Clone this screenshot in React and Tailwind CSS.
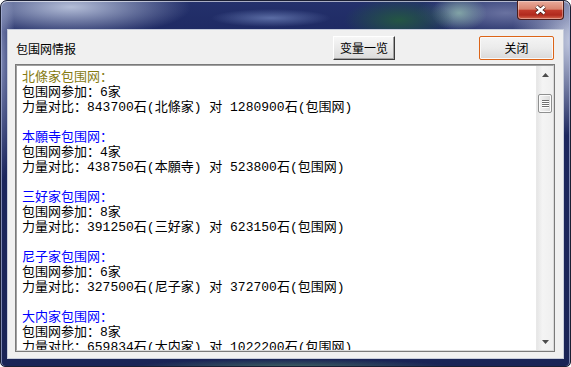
const blocks = [
  { name: "北條家", color: "text-[#857a10]", count: 6, own: "843700", net: "1280900" },
  { name: "本願寺", color: "text-[#0000ff]", count: 4, own: "438750", net: "523800" },
  { name: "三好家", color: "text-[#0000ff]", count: 8, own: "391250", net: "623150" },
  { name: "尼子家", color: "text-[#0000ff]", count: 6, own: "327500", net: "372700" },
  { name: "大内家", color: "text-[#0000ff]", count: 8, own: "659834", net: "1022200" },
];

function CloseButton() {
  return (
    <div className="flex h-[19px] w-[47px] items-center justify-center rounded-b-[4px] border border-t-0 border-[#4a1d1a] bg-[linear-gradient(to_bottom,#e9ab9c_0%,#d9846f_45%,#c13a2b_52%,#b0291d_78%,#d66a50_100%)] shadow-[inset_0_0_0_1px_rgba(255,255,255,0.35)]">
      <svg width="13" height="10" viewBox="0 0 13 10">
        <path d="M2.5 1.5 L10.5 8.5 M10.5 1.5 L2.5 8.5" stroke="#3b1713" strokeWidth="4" />
        <path d="M2.5 1.5 L10.5 8.5 M10.5 1.5 L2.5 8.5" stroke="#ffffff" strokeWidth="2.4" />
      </svg>
    </div>
  );
}

function Arrow({ down }) {
  return (
    <div className="flex h-[17px] items-center justify-center">
      <svg width="7" height="4" viewBox="0 0 7 4">
        <path d={down ? "M0 0 H7 L3.5 4 Z" : "M0 4 H7 L3.5 0 Z"} fill="#4d4d4d" />
      </svg>
    </div>
  );
}

function ScrollBar() {
  return (
    <div className="flex w-[17px] flex-col border-l border-[#e8e8e8] bg-[linear-gradient(to_right,#e6e6e6,#f4f4f4_35%,#efefef)]">
      <Arrow />
      <div className="mx-auto mt-[11px] flex h-[19px] w-[14px] flex-col items-center justify-center gap-[1px] rounded-[2px] border border-[#8f9090] bg-[linear-gradient(to_right,#f3f3f3,#e6e6e6_50%,#d9d9d9)] shadow-[inset_0_0_0_1px_#fbfbfb]">
        {[0, 1, 2, 3].map((i) => (
          <div key={i} className="h-[1px] w-[7px] bg-[#6f6f6f] shadow-[0_1px_0_#ffffff]" />
        ))}
      </div>
      <div className="flex-1" />
      <Arrow down />
    </div>
  );
}

export default function App() {
  return (
    <div className="h-[367px] w-[571px] bg-white font-['Noto_Sans_CJK_SC',sans-serif]">
      <div className="flex h-full w-full flex-col overflow-hidden rounded-t-[7px] rounded-b-[5px] border border-[#1a1f33] bg-[radial-gradient(ellipse_120px_30px_at_70px_6px,rgba(195,205,228,0.9),transparent),radial-gradient(ellipse_60px_9px_at_270px_17px,rgba(110,130,185,0.75),transparent),radial-gradient(ellipse_55px_22px_at_398px_19px,rgba(36,88,66,0.95),transparent),radial-gradient(ellipse_28px_18px_at_458px_12px,rgba(140,178,172,0.85),transparent),radial-gradient(ellipse_90px_24px_at_505px_12px,rgba(118,126,170,0.85),transparent),radial-gradient(ellipse_60px_95px_at_571px_40px,rgba(205,212,232,0.95),transparent),radial-gradient(ellipse_160px_8px_at_290px_366px,rgba(70,112,100,0.8),transparent),radial-gradient(ellipse_14px_120px_at_0px_60px,rgba(150,160,200,0.8),transparent),linear-gradient(to_bottom,#24316c,#1d2861_40px,#1a2456)] px-[6px] pb-[7px] shadow-[inset_0_1px_0_rgba(255,255,255,0.6),inset_1px_0_0_rgba(170,180,215,0.7),inset_-1px_0_0_rgba(170,180,215,0.7)]">
        <div className="flex h-[28px] shrink-0 justify-end">
          <CloseButton />
        </div>

        <div className="flex flex-1 flex-col border border-[#c7cddb] bg-[#f0f0f0] pl-[7px] pr-[8px] pt-[6px]">
          <div className="flex h-[24px] items-start">
            <div className="flex-1 pl-[1px] pt-[6px] text-[12px] leading-[14px] text-black">包围网情报</div>
            <button className="h-[24px] w-[62px] border border-t-white border-l-white border-r-[#3c3c3c] border-b-[#3c3c3c] bg-[linear-gradient(to_bottom,#f7f7f7,#e9e9e9_50%,#dadada)] text-[12px] leading-[14px] text-black shadow-[inset_-1px_-1px_0_#a0a0a0]">
              变量一览
            </button>
            <button className="ml-[84px] mr-[1px] h-[24px] w-[75px] rounded-[2px] border border-[#dc6418] bg-[linear-gradient(to_bottom,#f4f4f4,#ebebeb_50%,#d9d9d9)] text-[12px] leading-[14px] text-black shadow-[inset_0_0_0_1px_#f9f9f9]">
              关闭
            </button>
          </div>

          <div className="mt-[4px] h-[288px] border border-[#7a7a7a]">
            <div className="flex h-full border border-t-[#a0a0a0] border-l-[#a0a0a0] border-r-[#dadada] border-b-[#dadada] bg-white">
              <div className="flex-1 overflow-hidden whitespace-nowrap pl-[5px] pt-[4px] font-['Liberation_Mono','Noto_Sans_CJK_SC',monospace] text-[13px] leading-[15px] text-black">
                {blocks.map((b, i) => (
                  <div key={b.name} className={i > 0 ? "mt-[15px]" : ""}>
                    <div className={b.color}>{b.name}包围网：</div>
                    <div>包围网参加：{b.count}家</div>
                    <div>
                      力量对比：{b.own}石({b.name}) 对 {b.net}石(包围网)
                    </div>
                  </div>
                ))}
              </div>
              <ScrollBar />
            </div>
          </div>
        </div>
      </div>
    </div>
  );
}
